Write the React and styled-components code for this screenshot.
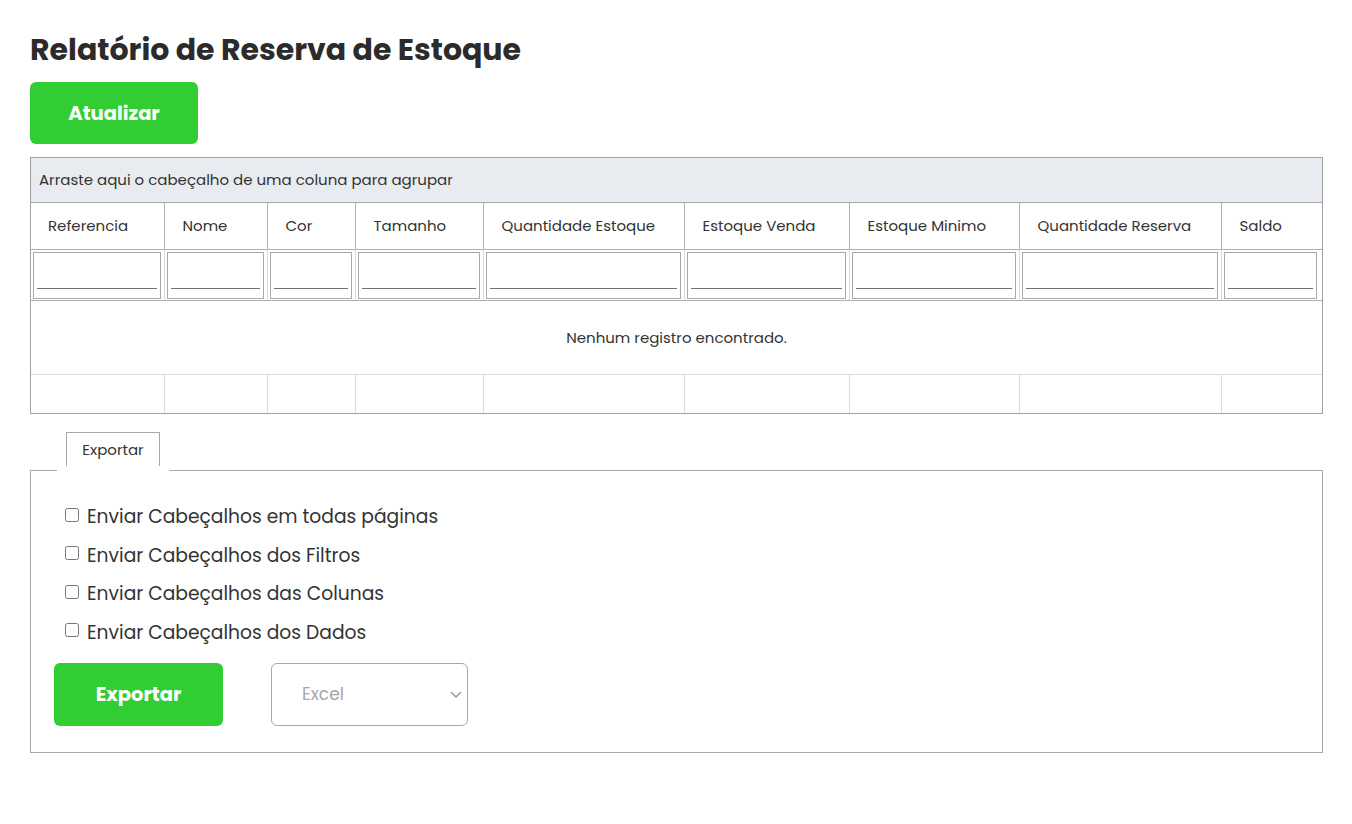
import React from 'react';
import styled, { createGlobalStyle } from 'styled-components';

const GlobalStyle = createGlobalStyle`
  body {
    margin: 0;
    background: #fff;
    font-family: 'Poppins', 'Open Sans', sans-serif;
    color: #333;
  }
`;

const Page = styled.div`
  padding: 30px 29px 60px 30px;
`;

const Title = styled.h1`
  margin: 0;
  font-size: 30px;
  line-height: 40px;
  font-weight: 700;
  color: #2b2b2b;
`;

const GreenButton = styled.button`
  width: ${(p) => p.$w}px;
  height: ${(p) => p.$h}px;
  border: none;
  border-radius: 6px;
  background: #32cd32;
  color: #fff;
  font-family: inherit;
  font-size: 19.5px;
  font-weight: 700;
  cursor: pointer;
`;

const Toolbar = styled.div`
  margin-top: 12px;
`;

const Grid = styled.div`
  margin-top: 13px;
  border: 1px solid #a0a0a0;
`;

const GroupPanel = styled.div`
  box-sizing: border-box;
  height: 45px;
  background: #e8ebf0;
  border-bottom: 1px solid #a7a7a7;
  display: flex;
  align-items: center;
  padding: 0 0 2px 8px;
  font-size: 15px;
`;

const Table = styled.table`
  width: 100%;
  border-collapse: collapse;
  table-layout: fixed;
`;

const HeadCell = styled.th`
  height: 44px;
  padding: 0 0 2px 18px;
  text-align: left;
  font-weight: 400;
  font-size: 15px;
  border-left: 1px solid #b0b0b0;
  border-bottom: 1px solid #b0b0b0;
  white-space: nowrap;
  overflow: hidden;
  &:first-child { border-left: none; padding-left: 17px; }
`;

const FilterCell = styled.td`
  height: 47px;
  padding: 2px 3px 1px 2px;
  border-left: 1px solid #dcdcdc;
  border-bottom: 1px solid #b0b0b0;
  &:first-child { border-left: none; }
  &:last-child { padding-right: 5px; }
`;

const FilterBox = styled.div`
  box-sizing: border-box;
  height: 47px;
  border: 1px solid #a8a8a8;
  padding: 0 3px;
  display: flex;
  align-items: flex-end;
`;

const FilterInput = styled.input`
  width: 100%;
  height: 30px;
  margin-bottom: 9px;
  border: none;
  border-bottom: 1px solid #707070;
  outline: none;
  background: transparent;
  font-family: inherit;
  padding: 0;
`;

const EmptyCell = styled.td`
  height: 73px;
  padding: 0;
  text-align: center;
  font-size: 15px;
  border-bottom: 1px solid #dcdcdc;
`;

const FootCell = styled.td`
  height: 38px;
  padding: 0;
  border-left: 1px solid #dcdcdc;
  &:first-child { border-left: none; }
`;

const TabBar = styled.div`
  margin-top: 18px;
  padding-left: 36px;
  display: flex;
`;

const Tab = styled.div`
  position: relative;
  box-sizing: border-box;
  width: 94px;
  height: 38px;
  border: 1px solid #a8a8a8;
  border-bottom: none;
  background: #fff;
  display: flex;
  align-items: center;
  justify-content: center;
  padding-bottom: 4px;
  font-size: 15px;
  &::after {
    content: '';
    position: absolute;
    left: -10px;
    right: -10px;
    bottom: -2px;
    height: 6px;
    background: #fff;
  }
`;

const Panel = styled.div`
  border: 1px solid #a8a8a8;
  padding: 32px 23px 26px 23px;
`;

const CheckList = styled.div`
  display: flex;
  flex-direction: column;
  gap: 11.67px;
  padding-left: 11px;
`;

const CheckRow = styled.label`
  display: flex;
  align-items: center;
  gap: 8px;
  font-size: 18.7px;
  line-height: 27px;
  color: #333;
`;

const CheckBox = styled.input`
  width: 14px;
  height: 14px;
  margin: 0 0 4px 0;
`;

const Actions = styled.div`
  margin-top: 17px;
  display: flex;
  gap: 48px;
`;

const SelectWrap = styled.div`
  position: relative;
  width: 197px;
  height: 63px;
`;

const Select = styled.select`
  width: 100%;
  height: 100%;
  appearance: none;
  border: 1px solid #a8a8a8;
  border-radius: 6px;
  background: #fff;
  padding-left: 30px;
  font-family: inherit;
  font-size: 17px;
  color: #a6a6a6;
  outline: none;
`;

const Chevron = styled.svg`
  position: absolute;
  right: 6px;
  top: 28px;
  pointer-events: none;
`;

const columns = [
  ['Referencia', 133],
  ['Nome', 103],
  ['Cor', 88],
  ['Tamanho', 128],
  ['Quantidade Estoque', 201],
  ['Estoque Venda', 165],
  ['Estoque Minimo', 170],
  ['Quantidade Reserva', 202],
  ['Saldo', 101],
];

const exportOptions = [
  'Enviar Cabeçalhos em todas páginas',
  'Enviar Cabeçalhos dos Filtros',
  'Enviar Cabeçalhos das Colunas',
  'Enviar Cabeçalhos dos Dados',
];

export default function App() {
  return (
    <Page>
      <GlobalStyle />
      <Title>Relatório de Reserva de Estoque</Title>
      <Toolbar>
        <GreenButton $w={168} $h={62}>Atualizar</GreenButton>
      </Toolbar>

      <Grid>
        <GroupPanel>Arraste aqui o cabeçalho de uma coluna para agrupar</GroupPanel>
        <Table>
          <colgroup>
            {columns.map(([name, w]) => (
              <col key={name} style={{ width: w }} />
            ))}
          </colgroup>
          <thead>
            <tr>
              {columns.map(([name]) => (
                <HeadCell key={name}>{name}</HeadCell>
              ))}
            </tr>
            <tr>
              {columns.map(([name]) => (
                <FilterCell key={name}>
                  <FilterBox>
                    <FilterInput type="text" />
                  </FilterBox>
                </FilterCell>
              ))}
            </tr>
          </thead>
          <tbody>
            <tr>
              <EmptyCell colSpan={columns.length}>Nenhum registro encontrado.</EmptyCell>
            </tr>
          </tbody>
          <tfoot>
            <tr>
              {columns.map(([name]) => (
                <FootCell key={name} />
              ))}
            </tr>
          </tfoot>
        </Table>
      </Grid>

      <TabBar>
        <Tab>Exportar</Tab>
      </TabBar>
      <Panel>
        <CheckList>
          {exportOptions.map((opt) => (
            <CheckRow key={opt}>
              <CheckBox type="checkbox" />
              {opt}
            </CheckRow>
          ))}
        </CheckList>
        <Actions>
          <GreenButton $w={169} $h={63}>Exportar</GreenButton>
          <SelectWrap>
            <Select defaultValue="Excel">
              <option>Excel</option>
              <option>PDF</option>
            </Select>
            <Chevron width="12" height="7" viewBox="0 0 12 7">
              <polyline points="1,1 6,6 11,1" fill="none" stroke="#a0a0a0" strokeWidth="1.6" />
            </Chevron>
          </SelectWrap>
        </Actions>
      </Panel>
    </Page>
  );
}
